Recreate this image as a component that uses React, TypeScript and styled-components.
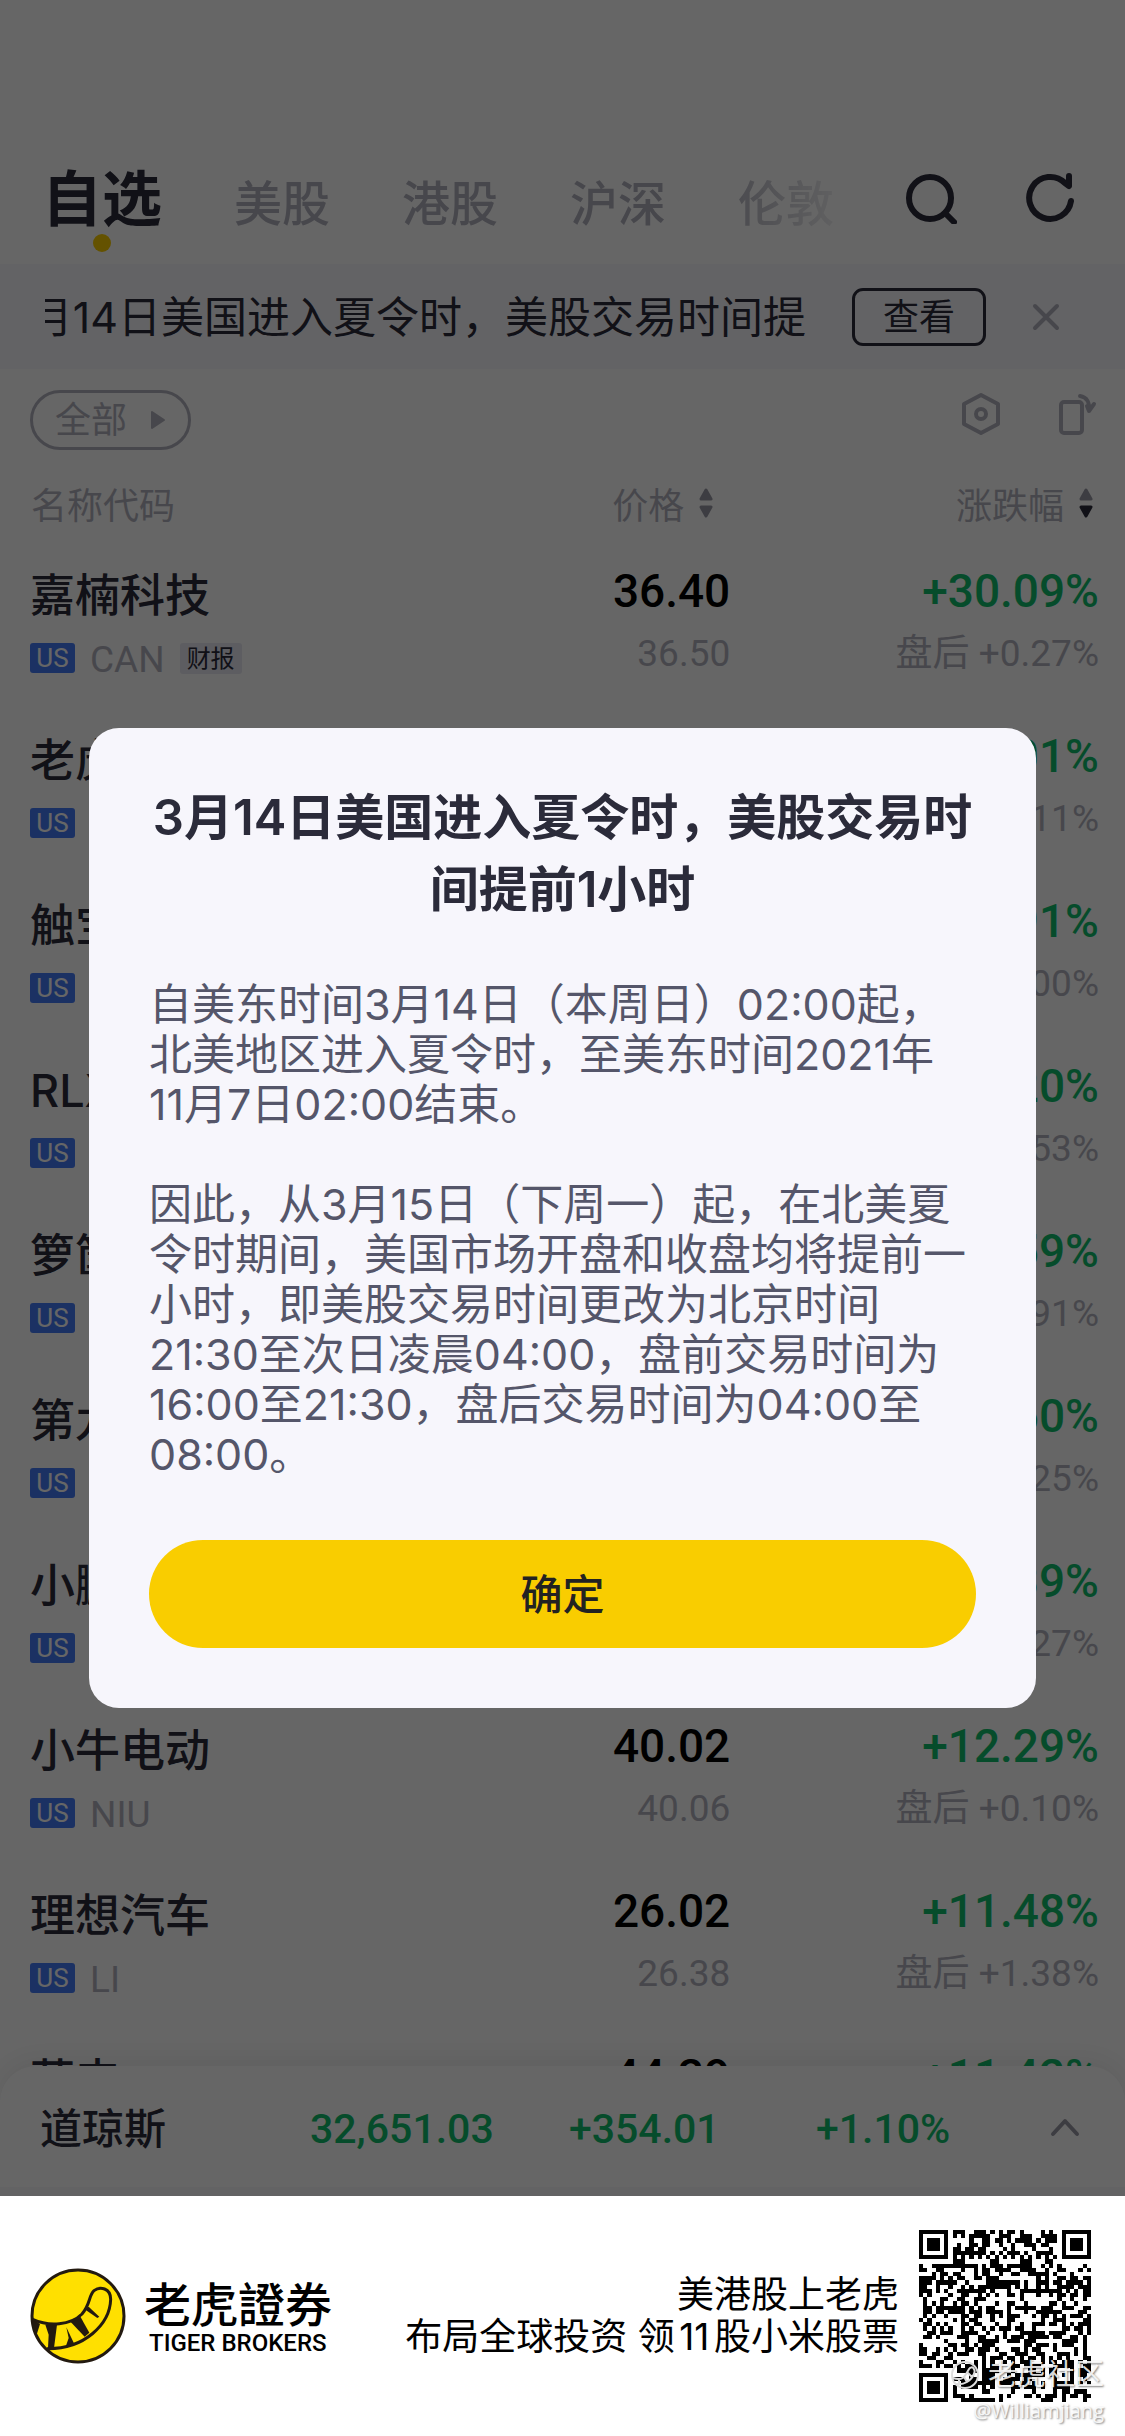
import React from "react";
import styled, { createGlobalStyle } from "styled-components";

const cjk = `Inter, "Noto Sans CJK SC", sans-serif`;
const num = `Roboto, "Noto Sans CJK SC", sans-serif`;

const c = {
  ink: "#2b2b3a",
  mid: "#b2b2be",
  up: "#10be6c",
  blue: "#447cf8",
  yellow: "#f9cd00",
};

const Global = createGlobalStyle`
  * { box-sizing: border-box; }
  body { margin: 0; font-family: ${cjk}; color: ${c.ink}; background: #fff; }
  button { font: inherit; color: inherit; background: none; border: 0; padding: 0; margin: 0; cursor: pointer; }
  svg { display: block; flex: none; }
`;

const Page = styled.div`
  display: flex;
  flex-direction: column;
  height: 100vh;
`;

const Screen = styled.main`
  position: relative;
  flex: 1;
  min-height: 0;
  display: flex;
  flex-direction: column;
  overflow: hidden;
`;

const Dim = styled.div`
  position: absolute;
  inset: 0;
  background: rgba(0, 0, 0, 0.6);
`;

const TopBar = styled.header`
  display: flex;
  align-items: flex-start;
  padding: 164px 49px 7px 42px;
`;

const Tabs = styled.nav`
  flex: 1;
  display: flex;
  align-items: baseline;
  gap: 72px;
  mask-image: linear-gradient(to right, #000 670px, rgba(0, 0, 0, 0.15) 800px);
`;

const Tab = styled.button<{ $active?: boolean }>`
  display: flex;
  flex-direction: column;
  align-items: center;
  height: 88px;
  font-size: ${(p) => (p.$active ? 60 : 48)}px;
  line-height: 70px;
  font-weight: ${(p) => (p.$active ? 700 : 500)};
  color: ${(p) => (p.$active ? c.ink : c.mid)};
  white-space: nowrap;
`;

const Dot = styled.span`
  width: 18px;
  height: 18px;
  flex: none;
  border-radius: 50%;
  background: ${c.yellow};
`;

const TopActions = styled.div`
  display: flex;
  gap: 69px;
  padding-top: 8px;
`;

const Notice = styled.section`
  display: flex;
  align-items: center;
  height: 105px;
  padding: 0 65px 0 45px;
  background: #f7f7fc;
`;

const Marquee = styled.p`
  flex: 1;
  min-width: 0;
  margin: 0;
  display: flex;
  justify-content: flex-end;
  overflow: hidden;
  white-space: nowrap;
  font-size: 43px;
  line-height: 60px;
`;

const ViewButton = styled.button`
  width: 134px;
  height: 58px;
  margin: 0 46px;
  border: 3px solid ${c.ink};
  border-radius: 11px;
  font-size: 36px;
  line-height: 48px;
`;

const Toolbar = styled.div`
  display: flex;
  align-items: flex-start;
  justify-content: space-between;
  padding: 21px 27px 14px 30px;
`;

const Pill = styled.button`
  display: flex;
  align-items: center;
  gap: 23px;
  height: 60px;
  padding: 0 22px;
  border: 3px solid ${c.mid};
  border-radius: 30px;
  color: ${c.mid};
  font-size: 36px;
  line-height: 54px;
`;

const ToolIcons = styled.div`
  display: flex;
  gap: 56px;
`;

const List = styled.div`
  flex: 1 1 0;
  min-height: 0;
  overflow: hidden;
`;

const Table = styled.table`
  width: 100%;
  border-collapse: collapse;
  table-layout: fixed;
`;

const Th = styled.th<{ $w: number; $end?: number }>`
  width: ${(p) => p.$w}%;
  height: 82px;
  padding: 0 ${(p) => p.$end ?? 0}px 4px ${(p) => (p.$end ? 0 : 31)}px;
  font-size: 36px;
  font-weight: 400;
  color: ${c.mid};
  text-align: left;
`;

const Sort = styled.button`
  display: flex;
  align-items: center;
  gap: 15px;
  margin-left: auto;
`;

const NameCell = styled.td`
  padding: 20px 0 21px 30px;
  vertical-align: top;
`;

const Name = styled.div`
  font-size: 45px;
  line-height: 60px;
  font-weight: 500;
  white-space: nowrap;
`;

const Meta = styled.div`
  display: flex;
  align-items: center;
  height: 64px;
  gap: 15px;
`;

const Market = styled.span`
  width: 45px;
  height: 30px;
  border-radius: 3px;
  background: ${c.blue};
  color: #fff;
  font: 400 26px/30px ${num};
  text-align: center;
`;

const Ticker = styled.span`
  padding-top: 4px;
  font: 400 37px/48px ${num};
  color: ${c.mid};
`;

const Tag = styled.span`
  padding: 0 7px;
  border-radius: 3px;
  background: #e8e8f2;
  font-size: 24px;
  line-height: 31px;
`;

const NumCell = styled.td<{ $end: number }>`
  padding: 15px ${(p) => p.$end}px 24px 0;
  vertical-align: top;
  text-align: right;
  white-space: nowrap;
  font-family: ${num};
`;

const Main = styled.div<{ $up?: boolean }>`
  font-size: 46px;
  line-height: 60px;
  font-weight: 500;
  color: ${(p) => (p.$up ? c.up : "#000")};
`;

const Sub = styled.div`
  font-size: 37px;
  line-height: 66px;
  color: ${c.mid};
`;

const IndexBar = styled.section`
  display: grid;
  grid-template-columns: 270fr 259fr 247fr 234fr 30px;
  align-items: center;
  height: 130px;
  padding: 0 45px 8px 40px;
  border-radius: 36px 36px 0 0;
  background: #fff;
  box-shadow: 0 -4px 30px rgba(0, 0, 0, 0.08), inset 0 -9px 0 #f7f7fa;
`;

const IndexName = styled.strong`
  padding-bottom: 4px;
  font-size: 42px;
  font-weight: 500;
`;

const IndexValue = styled.span`
  padding-top: 4px;
  font: 500 41px/60px ${num};
  color: ${c.up};
`;

const Footer = styled.footer`
  position: relative;
  display: flex;
  align-items: center;
  height: 240px;
  padding: 0 34px 0 30px;
  background: #fff;
  color: #000;
`;

const Brand = styled.div`
  margin-left: 18px;
`;

const BrandName = styled.div`
  font-family: "Noto Sans CJK TC", sans-serif;
  font-size: 47px;
  line-height: 54px;
  font-weight: 500;
`;

const BrandLatin = styled.div`
  padding-left: 5px;
  font: 500 24px/28px ${num};
`;

const Slogan = styled.p`
  flex: 1;
  margin: 0 20px 0 0;
  text-align: right;
  text-autospace: normal;
  font-size: 37px;
  line-height: 42px;
`;

const Watermark = styled.div`
  position: absolute;
  right: 21px;
  bottom: 11px;
  display: flex;
  flex-direction: column;
  align-items: flex-end;
  color: rgba(255, 255, 255, 0.85);
  text-shadow: 1px 1px 2px rgba(0, 0, 0, 0.5);
`;

const WatermarkTitle = styled.div`
  display: flex;
  align-items: center;
  gap: 8px;
  font-size: 29px;
  line-height: 44px;
  font-weight: 400;
`;

const WatermarkUser = styled.div`
  font: 400 20px/28px "Open Sans", sans-serif;
`;

const ModalLayer = styled.div`
  position: fixed;
  inset: 0;
  display: flex;
  align-items: center;
  justify-content: center;
  padding: 0 89px;
`;

const Modal = styled.div`
  width: 100%;
  padding: 54px 60px 60px;
  border-radius: 30px;
  background: #f7f6fc;
`;

const Title = styled.h2`
  margin: 0 0 53px;
  font-size: 49px;
  line-height: 72px;
  font-weight: 600;
  text-align: center;
`;

const Para = styled.p`
  margin: 0 0 50px;
  font-size: 43px;
  line-height: 50px;
  color: #55566a;
`;

const DateText = styled.span`
  white-space: nowrap;
`;

const Confirm = styled.button`
  width: 100%;
  height: 108px;
  margin-top: 11px;
  padding-bottom: 6px;
  border-radius: 54px;
  background: ${c.yellow};
  color: #222;
  font-size: 42px;
  font-weight: 500;
`;

const Icon = ({ w, h, children, sw = 6, color = c.ink }: { w: number; h: number; children: React.ReactNode; sw?: number; color?: string }) => (
  <svg width={w} height={h} viewBox={`0 0 ${w} ${h}`} fill="none" stroke={color} strokeWidth={sw} strokeLinecap="round" strokeLinejoin="round" aria-hidden="true">
    {children}
  </svg>
);

const SortArrows = ({ down }: { down?: boolean }) => (
  <svg width="14" height="30" viewBox="0 0 14 30" aria-hidden="true">
    <path d="M7 2L12 11H2Z" fill="#9a9aa6" stroke="#9a9aa6" strokeWidth="3" strokeLinejoin="round" />
    <path d="M7 28L12 19H2Z" fill={down ? c.ink : "#9a9aa6"} stroke={down ? c.ink : "#9a9aa6"} strokeWidth="3" strokeLinejoin="round" />
  </svg>
);

const TigerLogo = () => (
  <svg width="96" height="96" viewBox="58 52 288 288" aria-hidden="true">
    <circle cx="202" cy="196" r="138" fill="#ffe000" stroke="#231a10" strokeWidth="9" />
    <g fill="#231a10">
      <path d="M64 204L88 220L78 252L68 240Z" />
      <path d="M104 222H139L130 292H112L114 252Z" />
      <path d="M167 230L192 282L165 288L174 262Z" />
      <path d="M178 212L208 196L236 246L222 258Z" />
      <path d="M222 176L234 168L266 198L260 202Z" />
    </g>
    <path d="M66 206C115 228 180 224 214 190C240 160 234 134 250 120C268 106 300 112 300 146C298 220 222 296 108 294" fill="none" stroke="#231a10" strokeWidth="9" />
  </svg>
);

const N = 41;

function qrPath(): string {
  let seed = 20210314;
  const rand = () => {
    seed = (seed * 1103515245 + 12345) % 2147483648;
    return seed / 2147483648;
  };
  const ring = (x: number, y: number, cx: number, cy: number) => Math.max(Math.abs(x - cx), Math.abs(y - cy));
  let d = "";
  for (let y = 0; y < N; y++) {
    for (let x = 0; x < N; x++) {
      let on = rand() < 0.52;
      if (x === 6 || y === 6) on = (x + y) % 2 === 0;
      const align = ring(x, y, 34, 34);
      if (align <= 2) on = align !== 1;
      for (const [cx, cy] of [[3, 3], [N - 4, 3], [3, N - 4]]) {
        const r = ring(x, y, cx, cy);
        if (r <= 4) on = r !== 2 && r !== 4;
      }
      if (on) d += `M${x} ${y}h1v1h-1z`;
    }
  }
  return d;
}

const QrCode = () => (
  <svg width="172" height="172" viewBox={`0 0 ${N} ${N}`} shapeRendering="crispEdges" role="img" aria-label="QR">
    <path d={qrPath()} fill="#000" />
  </svg>
);

const tabs = ["自选", "美股", "港股", "沪深", "伦敦"];

type Stock = { name: string; code: string; price: string; after: string; pct: string; afterPct: string; tag?: string };

const stocks: Stock[] = [
  { name: "嘉楠科技", code: "CAN", price: "36.40", after: "36.50", pct: "+30.09%", afterPct: "+0.27%", tag: "财报" },
  { name: "老虎证券", code: "TIGR", price: "22.34", after: "22.36", pct: "+21.01%", afterPct: "+0.11%" },
  { name: "触宝", code: "CTK", price: "4.02", after: "4.02", pct: "+18.91%", afterPct: "+0.00%" },
  { name: "RLX", code: "RLX", price: "18.80", after: "18.90", pct: "+16.20%", afterPct: "+0.53%" },
  { name: "箩筐技术", code: "LKCO", price: "1.10", after: "1.11", pct: "+14.59%", afterPct: "+0.91%" },
  { name: "第九城市", code: "NCTY", price: "40.10", after: "40.20", pct: "+13.60%", afterPct: "+0.25%" },
  { name: "小鹏汽车", code: "XPEV", price: "33.30", after: "33.39", pct: "+12.39%", afterPct: "+0.27%" },
  { name: "小牛电动", code: "NIU", price: "40.02", after: "40.06", pct: "+12.29%", afterPct: "+0.10%" },
  { name: "理想汽车", code: "LI", price: "26.02", after: "26.38", pct: "+11.48%", afterPct: "+1.38%" },
  { name: "蔚来", code: "NIO", price: "44.39", after: "44.50", pct: "+11.42%", afterPct: "+0.25%" },
];

export default function App() {
  return (
    <Page>
      <Global />
      <Screen>
        <TopBar>
          <Tabs>
            {tabs.map((t, i) => (
              <Tab key={t} $active={i === 0}>
                {t}
                {i === 0 && <Dot />}
              </Tab>
            ))}
          </Tabs>
          <TopActions>
            <button aria-label="搜索">
              <Icon w={52} h={52}>
                <circle cx="25" cy="26" r="21" />
                <path d="M40 41L49 50" />
              </Icon>
            </button>
            <button aria-label="刷新">
              <Icon w={50} h={52}>
                <path d="M45 29A21 21 0 1 1 39 11L43 14V4" />
              </Icon>
            </button>
          </TopActions>
        </TopBar>

        <Notice>
          <Marquee>3月14日美国进入夏令时，美股交易时间提</Marquee>
          <ViewButton>查看</ViewButton>
          <button aria-label="关闭">
            <Icon w={28} h={28} sw={4} color={c.mid}>
              <path d="M3 3L25 25M25 3L3 25" />
            </Icon>
          </button>
        </Notice>

        <Toolbar>
          <Pill>
            全部
            <svg width="16" height="20" viewBox="0 0 16 20" aria-hidden="true">
              <path d="M2 2L14 10L2 18Z" fill={c.mid} stroke={c.mid} strokeWidth="2" strokeLinejoin="round" />
            </svg>
          </Pill>
          <ToolIcons>
            <button aria-label="设置">
              <Icon w={42} h={48} sw={4} color={c.mid}>
                <path d="M21 5L38 14V34L21 43L4 34V14Z" />
                <circle cx="21" cy="24" r="5" />
              </Icon>
            </button>
            <button aria-label="横屏">
              <Icon w={40} h={48} sw={4} color={c.mid}>
                <rect x="3" y="12" width="21" height="31" rx="3" />
                <path d="M22 6C29 7 32 13 31 21M29 16L31 21L36 14" />
              </Icon>
            </button>
          </ToolIcons>
        </Toolbar>

        <List>
          <Table>
            <thead>
              <tr>
                <Th $w={45}>名称代码</Th>
                <Th $w={20} $end={18}>
                  <Sort>价格<SortArrows /></Sort>
                </Th>
                <Th $w={35} $end={32}>
                  <Sort>涨跌幅<SortArrows down /></Sort>
                </Th>
              </tr>
            </thead>
            <tbody>
              {stocks.map((s) => (
                <tr key={s.code}>
                  <NameCell>
                    <Name>{s.name}</Name>
                    <Meta>
                      <Market>US</Market>
                      <Ticker>{s.code}</Ticker>
                      {s.tag && <Tag>{s.tag}</Tag>}
                    </Meta>
                  </NameCell>
                  <NumCell $end={1}>
                    <Main>{s.price}</Main>
                    <Sub>{s.after}</Sub>
                  </NumCell>
                  <NumCell $end={26}>
                    <Main $up>{s.pct}</Main>
                    <Sub>盘后 {s.afterPct}</Sub>
                  </NumCell>
                </tr>
              ))}
            </tbody>
          </Table>
        </List>

        <IndexBar>
          <IndexName>道琼斯</IndexName>
          <IndexValue>32,651.03</IndexValue>
          <IndexValue>+354.01</IndexValue>
          <IndexValue>+1.10%</IndexValue>
          <button aria-label="展开">
            <Icon w={30} h={20} sw={4} color="#9a9aa6">
              <path d="M3 17L15 4L27 17" />
            </Icon>
          </button>
        </IndexBar>
        <Dim />
      </Screen>

      <Footer>
        <TigerLogo />
        <Brand>
          <BrandName>老虎證券</BrandName>
          <BrandLatin>TIGER BROKERS</BrandLatin>
        </Brand>
        <Slogan>
          美港股上老虎
          <br />
          布局全球投资 领11股小米股票
        </Slogan>
        <QrCode />
        <Watermark>
          <WatermarkTitle>
            <Icon w={30} h={30} sw={2} color="#ddd">
              <circle cx="15" cy="15" r="13" />
              <path d="M3 18C14 22 16 14 19 9C22 5 26 9 24 14C21 21 14 25 7 24M9 19V24M14 17L17 22M18 13L22 17" />
            </Icon>
            老虎社区
          </WatermarkTitle>
          <WatermarkUser>@Williamjiang</WatermarkUser>
        </Watermark>
      </Footer>

      <ModalLayer>
        <Modal role="dialog" aria-modal="true" aria-labelledby="dst-title">
          <Title id="dst-title">3月14日美国进入夏令时，美股交易时间提前1小时</Title>
          <Para>
            自美东时间3月14日（本周日）02:00起，北美地区进入夏令时，至美东时间2021年<DateText>11月7日02:00</DateText>结束。
          </Para>
          <Para>
            因此，从3月15日（下周一）起，在北美夏令时期间，美国市场开盘和收盘均将提前一小时，即美股交易时间更改为北京时间21:30至次日凌晨04:00，盘前交易时间为16:00至21:30，盘后交易时间为04:00至08:00。
          </Para>
          <Confirm>确定</Confirm>
        </Modal>
      </ModalLayer>
    </Page>
  );
}
